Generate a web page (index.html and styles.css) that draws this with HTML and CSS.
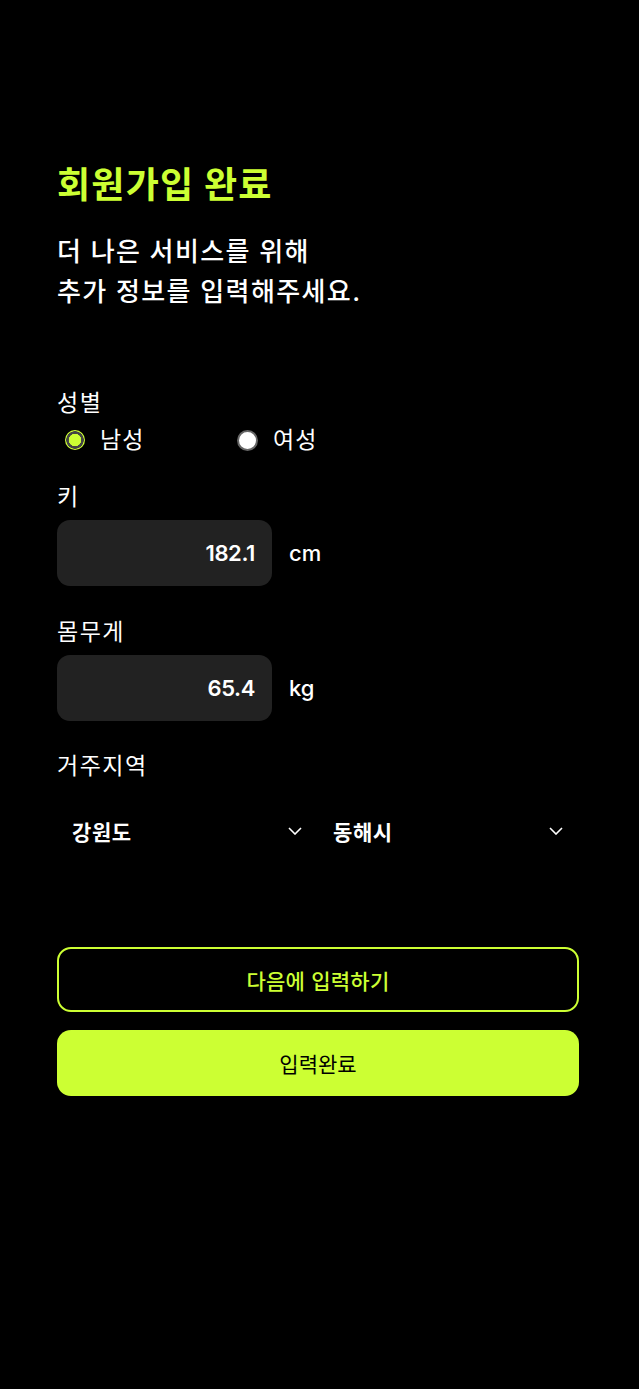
FILE: index.html
```html
<!DOCTYPE html>
<html lang="ko">
<head>
<meta charset="utf-8">
<title>회원가입 완료</title>
<link rel="stylesheet" href="styles.css">
</head>
<body>
<main class="page">
  <h1 class="title">회원가입 완료</h1>
  <p class="subtitle">더 나은 서비스를 위해<br>추가 정보를 입력해주세요.</p>

  <section class="field field-gender">
    <div class="label">성별</div>
    <div class="radio-row">
      <label class="option"><span class="radio radio-on"></span><span class="option-text">남성</span></label>
      <label class="option"><span class="radio radio-off"></span><span class="option-text">여성</span></label>
    </div>
  </section>

  <section class="field field-height">
    <div class="label">키</div>
    <div class="measure">
      <div class="input-box">182.1</div>
      <span class="unit">cm</span>
    </div>
  </section>

  <section class="field field-weight">
    <div class="label">몸무게</div>
    <div class="measure">
      <div class="input-box">65.4</div>
      <span class="unit">kg</span>
    </div>
  </section>

  <section class="field field-region">
    <div class="label">거주지역</div>
    <div class="select-row">
      <div class="select"><span class="select-text">강원도</span>
        <svg class="chevron" width="14" height="8" viewBox="0 0 14 8"><path d="M1 1 L7 7 L13 1" fill="none" stroke="#fff" stroke-width="1.6"/></svg>
      </div>
      <div class="select"><span class="select-text">동해시</span>
        <svg class="chevron" width="14" height="8" viewBox="0 0 14 8"><path d="M1 1 L7 7 L13 1" fill="none" stroke="#fff" stroke-width="1.6"/></svg>
      </div>
    </div>
  </section>

  <div class="actions">
    <button class="btn btn-outline">다음에 입력하기</button>
    <button class="btn btn-fill">입력완료</button>
  </div>
</main>
</body>
</html>
```

FILE: styles.css
```css
html, body {
  margin: 0;
  padding: 0;
  background: #000;
}
body {
  color: #fff;
  font-family: "Inter", "Noto Sans CJK KR", "Noto Sans", sans-serif;
  min-height: 1389px;
}
.page {
  padding: 161px 60px 0 57px;
  display: flex;
  flex-direction: column;
}
.title {
  margin: 0;
  font-size: 36px;
  line-height: 48px;
  font-weight: 700;
  color: #ccff33;
  letter-spacing: 1.2px;
}
.subtitle {
  margin: 23px 0 0;
  font-size: 26px;
  line-height: 40px;
  font-weight: 500;
  letter-spacing: 1.4px;
}
.label {
  font-size: 23px;
  line-height: 32px;
  font-weight: 400;
  letter-spacing: 1.5px;
}
.field-gender { margin-top: 75px; }
.radio-row {
  margin-top: 5px;
  display: grid;
  grid-template-columns: 172px auto;
  padding-left: 8px;
  height: 32px;
  align-items: center;
}
.option {
  display: flex;
  align-items: center;
  gap: 15px;
}
.option-text {
  font-size: 23px;
  line-height: 32px;
  letter-spacing: 1px;
}
.radio {
  width: 20px;
  height: 20px;
  border-radius: 50%;
  box-sizing: border-box;
  display: block;
}
.radio-on {
  background: radial-gradient(circle, #ccff33 0 6px, #444 6.5px 8.5px, #ccff33 9px);
}
.radio-off {
  background: #fff;
  border: 2px solid #666;
  width: 21px;
  height: 21px;
}
.field-height { margin-top: 25px; }
.field-weight { margin-top: 30px; }
.field-region { margin-top: 29px; }
.measure {
  margin-top: 7px;
  display: flex;
  align-items: center;
  gap: 17px;
}
.input-box {
  width: 215px;
  height: 66px;
  box-sizing: border-box;
  background: #222;
  border-radius: 13px;
  display: flex;
  align-items: center;
  justify-content: flex-end;
  padding-right: 17px;
  font-size: 22px;
  font-weight: 600;
  letter-spacing: -0.4px;
}
.unit {
  font-size: 22px;
  font-weight: 500;
}
.select-row {
  margin-top: 21px;
  display: grid;
  grid-template-columns: 1fr 1fr;
}
.select {
  height: 56px;
  display: flex;
  align-items: center;
  justify-content: space-between;
  padding: 0 16px 0 15px;
}
.select-text {
  font-size: 21px;
  font-weight: 700;
  letter-spacing: 0.6px;
}
.chevron { display: block; }
.actions {
  margin-top: 88px;
  display: flex;
  flex-direction: column;
  gap: 18px;
}
.btn {
  width: 100%;
  font-family: inherit;
  font-size: 21px;
  border-radius: 14px;
  cursor: pointer;
}
.btn-outline {
  height: 65px;
  background: #000;
  border: 2px solid #ccff33;
  color: #ccff33;
  font-weight: 500;
  letter-spacing: 0.3px;
}
.btn-fill {
  height: 66px;
  background: #ccff33;
  border: none;
  color: #000;
  font-weight: 400;
}
```
